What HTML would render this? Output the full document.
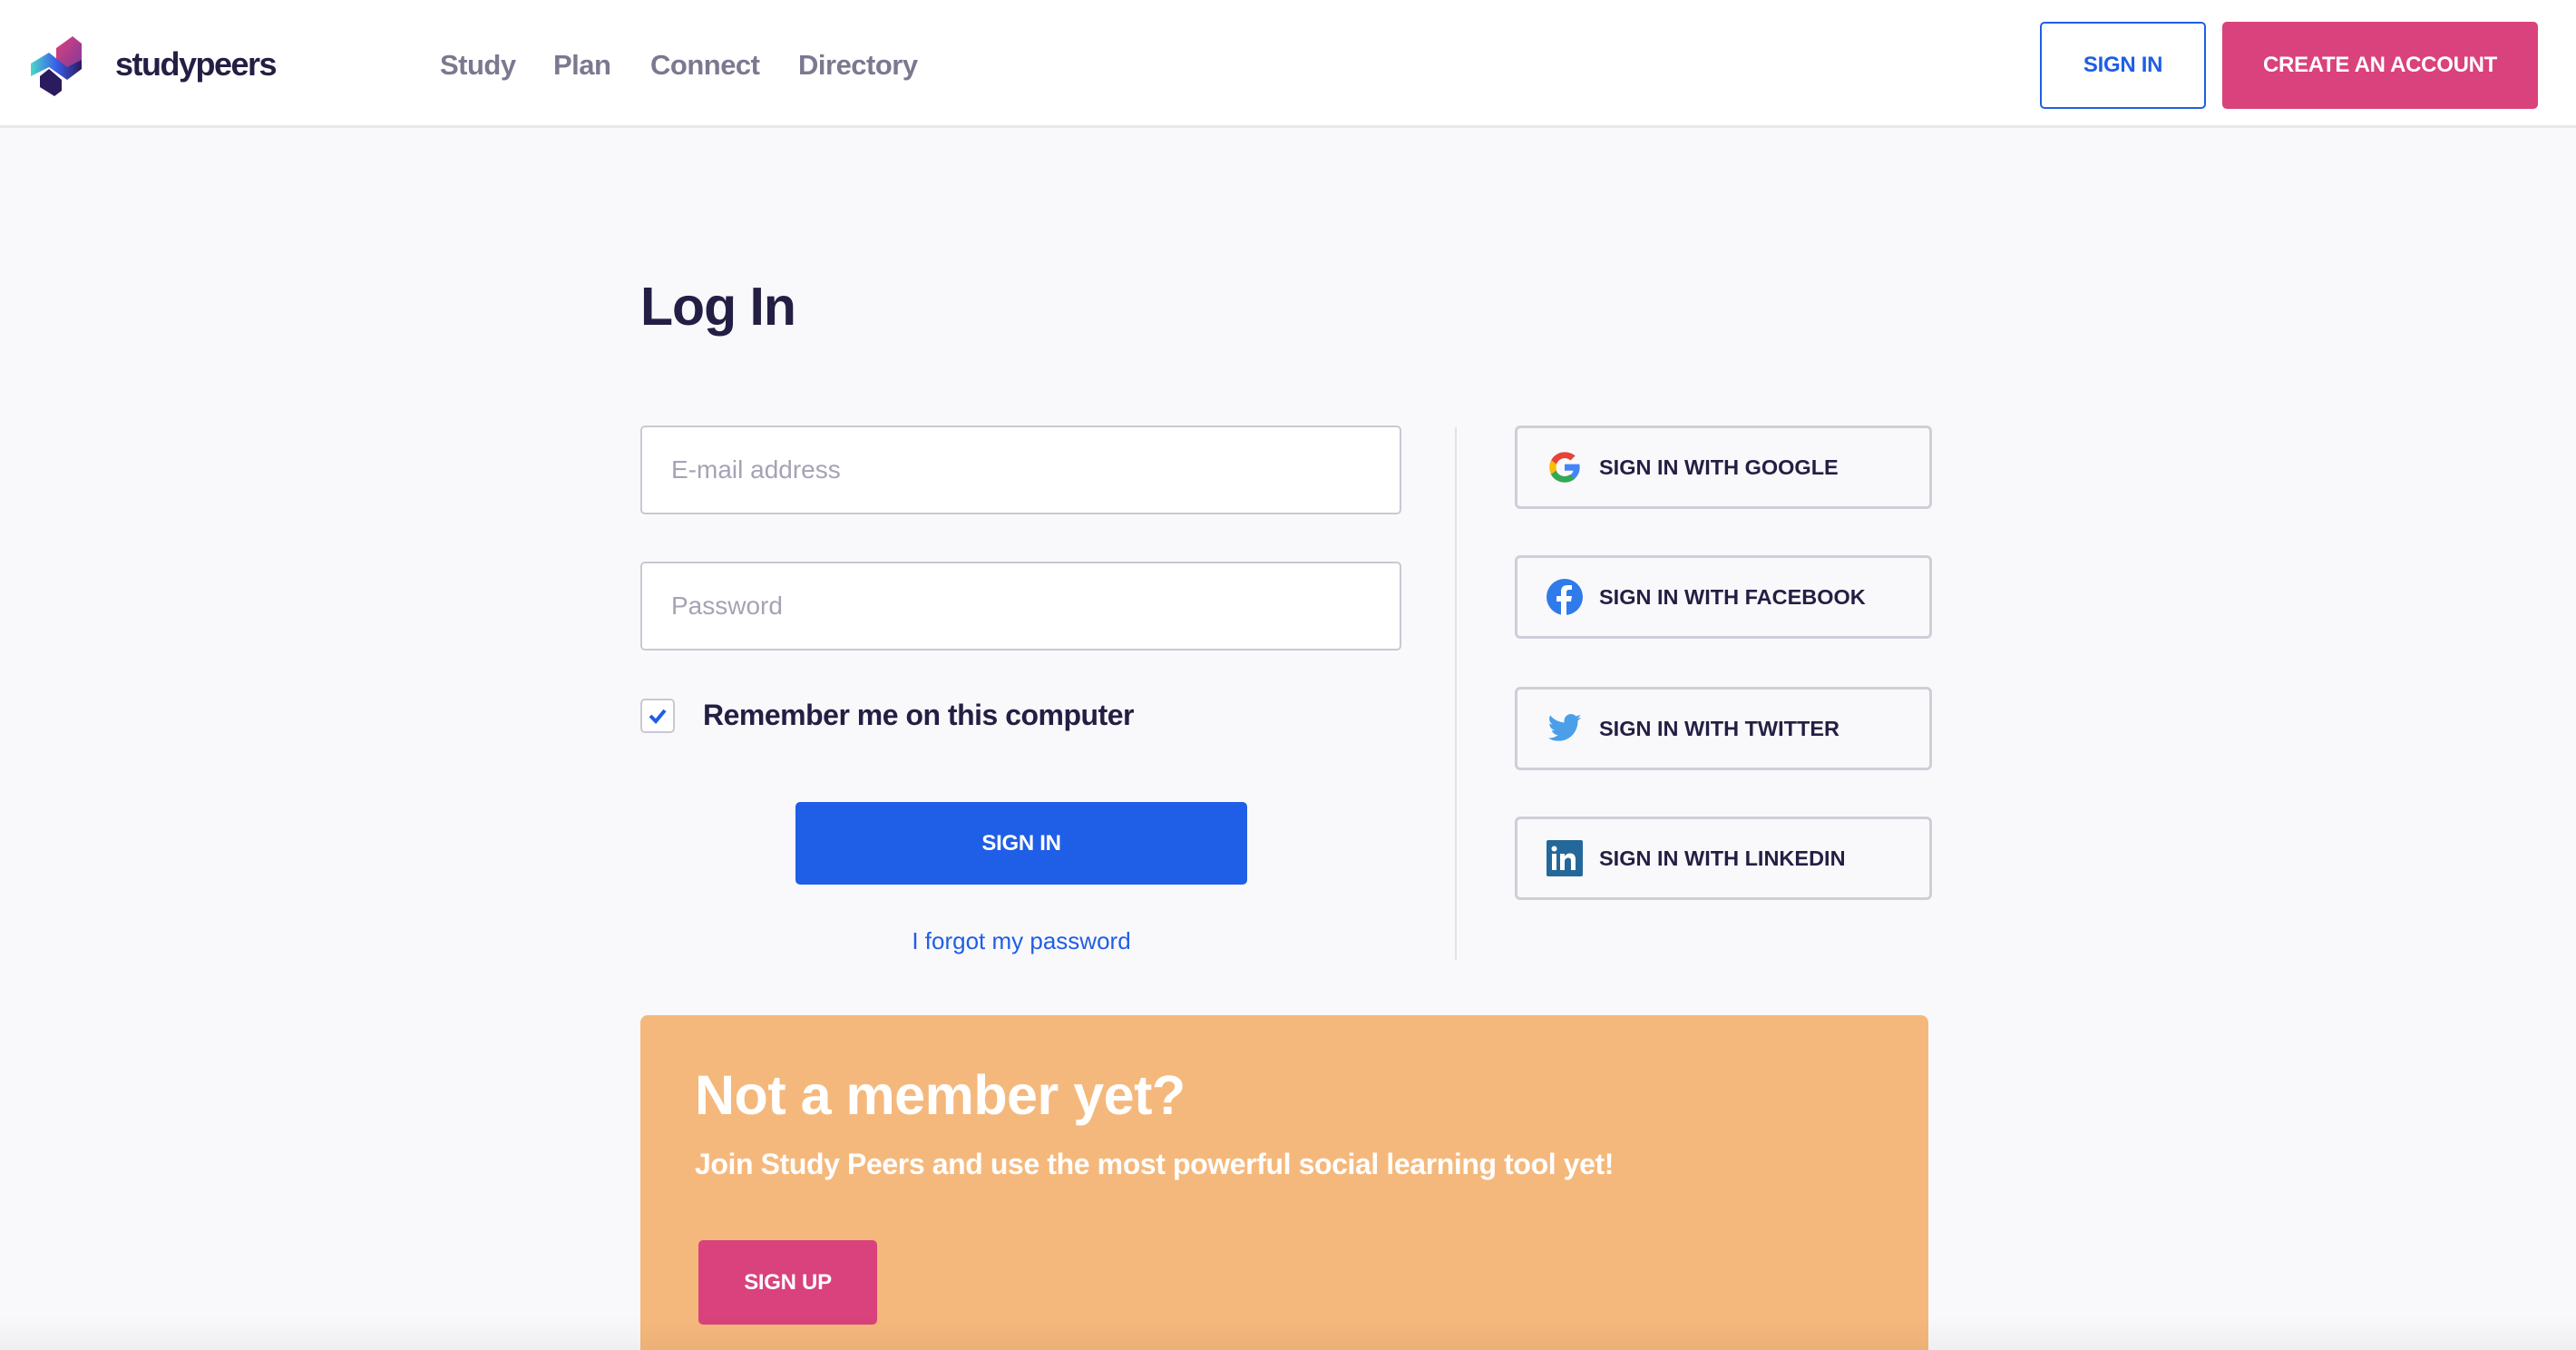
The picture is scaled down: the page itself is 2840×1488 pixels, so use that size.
<!DOCTYPE html>
<html><head><meta charset="utf-8"><style>
*{box-sizing:border-box;margin:0;padding:0}
body{width:2840px;height:1488px;overflow:hidden;background:#f9f9fb;font-family:"Liberation Sans",sans-serif;position:relative;color:#231f44}
.abs{position:absolute}
.hdr{left:0;top:0;width:2840px;height:141px;background:#fff;border-bottom:3px solid #e8e8ee}
.nav{top:54px;font-size:31px;color:#7b7890;font-weight:bold;letter-spacing:-0.5px}
.btn{display:flex;align-items:center;justify-content:center;font-weight:bold;border-radius:5px;letter-spacing:-0.3px}
.inp{left:706px;width:839px;height:98px;border:2px solid #c9c8d3;border-radius:5px;background:#fff;padding-left:32px;display:flex;align-items:center;font-size:28px;color:#a5a3b5}
.soc{left:1670px;width:460px;height:92px;border:3px solid #cfced8;border-radius:6px;display:flex;align-items:center;padding-left:32px;font-size:23.5px;font-weight:bold;color:#231f44}
.soc svg{width:40px;height:40px;margin-right:18px}
</style></head><body>
<div class="abs hdr"></div>
<svg class="abs" style="left:32px;top:38px" width="90" height="70" viewBox="0 0 90 70">
<defs><linearGradient id="g1" x1="0" y1="0" x2="1" y2="1"><stop offset="0" stop-color="#e0407a"/><stop offset="1" stop-color="#7a3a9c"/></linearGradient>
<linearGradient id="g2" x1="0" y1="0" x2="1" y2="0"><stop offset="0" stop-color="#4ad8c8"/><stop offset=".5" stop-color="#3a5ee8"/><stop offset="1" stop-color="#2a1a5e"/></linearGradient></defs>
<path d="M30 15 L48 2 L58 10 L58 30 L44 40 L30 28Z" fill="url(#g1)"/>
<path d="M2 32 L22 20 L42 36 L58 28 L58 38 L42 50 L22 36 L2 46Z" fill="url(#g2)"/>
<path d="M12 46 L22 38 L36 50 L36 62 L28 68 L12 58Z" fill="#2a1a5e"/>
</svg>
<div class="abs" style="left:127px;top:50px;font-size:36px;font-weight:bold;color:#231f44;letter-spacing:-1.5px">studypeers</div>
<div class="abs nav" style="left:485px">Study</div>
<div class="abs nav" style="left:610px">Plan</div>
<div class="abs nav" style="left:717px">Connect</div>
<div class="abs nav" style="left:880px">Directory</div>
<div class="abs btn" style="left:2249px;top:24px;width:183px;height:96px;border:2px solid #1f5ee6;color:#1f5ee6;background:#fff;font-size:24px">SIGN IN</div>
<div class="abs btn" style="left:2450px;top:24px;width:348px;height:96px;background:#d9427c;color:#fff;font-size:24px">CREATE AN ACCOUNT</div>

<div class="abs" style="left:706px;top:304px;font-size:59px;font-weight:bold;letter-spacing:-1px">Log In</div>
<div class="abs inp" style="top:469px">E-mail address</div>
<div class="abs inp" style="top:619px">Password</div>
<div class="abs" style="left:706px;top:770px;width:38px;height:38px;border:2px solid #c9c8d3;border-radius:5px;background:#fff"><svg width="34" height="34" viewBox="0 0 34 34"><path d="M9 17 L15 23 L25 11" stroke="#1f5ee6" stroke-width="4" fill="none"/></svg></div>
<div class="abs" style="left:775px;top:770px;font-size:32px;font-weight:bold;letter-spacing:-0.5px">Remember me on this computer</div>
<div class="abs btn" style="left:877px;top:884px;width:498px;height:91px;background:#1f5ee6;color:#fff;font-size:24px">SIGN IN</div>
<div class="abs" style="left:877px;width:498px;top:1022px;text-align:center;font-size:26px;color:#1f5ee6">I forgot my password</div>
<div class="abs" style="left:1604px;top:471px;width:2px;height:587px;background:#e2e1e8"></div>

<div class="abs soc" style="top:469px"><svg viewBox="0 0 48 48"><path d="M43.6 20H24v8.5h11.3C34.3 33.5 29.8 36 24 36c-6.6 0-12-5.4-12-12s5.4-12 12-12c3 0 5.7 1.1 7.8 2.9l6-6C34.3 5.8 29.4 4 24 4 13 4 4 13 4 24s9 20 20 20c11 0 20-8 20-20 0-1.3-.1-2.7-.4-4z" fill="#4285f4"/><path d="M6.3 14.7l7 5.1C15.1 15.3 19.2 12 24 12c3 0 5.7 1.1 7.8 2.9l6-6C34.3 5.8 29.4 4 24 4 16.3 4 9.7 8.3 6.3 14.7z" fill="#ea4335"/><path d="M24 44c5.2 0 9.9-1.8 13.4-4.9l-6.6-5.4C28.9 35.1 26.6 36 24 36c-5.7 0-10.300-3.7-11.600-8.700l-7 5.400C8.7 39.5 15.8 44 24 44z" fill="#34a853"/><path d="M6.3 14.7C4.8 17.5 4 20.7 4 24s.8 6.5 2.3 9.3l7-5.4c-.4-1.2-.6-2.5-.6-3.9s.2-2.7.6-3.9z" fill="#fbbc05"/></svg>SIGN IN WITH GOOGLE</div>
<div class="abs soc" style="top:612px"><svg viewBox="0 0 40 40"><circle cx="20" cy="20" r="20" fill="#2f7bea"/><path d="M22 40V25h5l1-6h-6v-4c0-2 1-3 3-3h3V7h-5c-5 0-7 3-7 7v5h-5v6h5v15z" fill="#fff"/></svg>SIGN IN WITH FACEBOOK</div>
<div class="abs soc" style="top:757px"><svg viewBox="0 0 24 24"><path d="M23 4.6c-.8.4-1.7.6-2.6.7.9-.6 1.6-1.4 2-2.5-.9.5-1.9.9-2.9 1.1a4.5 4.5 0 0 0-7.7 4.1C8 7.8 4.7 6 2.5 3.3a4.5 4.5 0 0 0 1.4 6c-.7 0-1.4-.2-2-.6 0 2.2 1.6 4 3.6 4.4-.7.2-1.4.2-2 .1.6 1.8 2.2 3.1 4.2 3.1A9 9 0 0 1 1 18.2 12.8 12.8 0 0 0 7.9 20.2c8.3 0 12.8-6.9 12.8-12.8v-.6c.9-.6 1.6-1.4 2.3-2.2z" fill="#4a9fe8"/></svg>SIGN IN WITH TWITTER</div>
<div class="abs soc" style="top:900px"><svg viewBox="0 0 40 40"><rect width="40" height="40" rx="2" fill="#24689a"/><rect x="6" y="15" width="5" height="18" fill="#fff"/><circle cx="8.5" cy="9.5" r="3" fill="#fff"/><path d="M15 15h5v3c1-2 3-3.5 6-3.5 4 0 6 2.5 6 7V33h-5v-10c0-2.5-1-3.5-3-3.5s-4 1.5-4 4V33h-5z" fill="#fff"/></svg>SIGN IN WITH LINKEDIN</div>

<div class="abs" style="left:706px;top:1119px;width:1420px;height:369px;background:#f5b87c;border-radius:8px 8px 0 0"></div>
<div class="abs" style="left:766px;top:1172px;font-size:61px;font-weight:bold;color:#fff;letter-spacing:-0.5px">Not a member yet?</div>
<div class="abs" style="left:766px;top:1265px;font-size:32px;font-weight:bold;color:#fff;letter-spacing:-0.4px">Join Study Peers and use the most powerful social learning tool yet!</div>
<div class="abs btn" style="left:770px;top:1367px;width:197px;height:93px;background:#d9427c;color:#fff;font-size:24px">SIGN UP</div>
<div class="abs" style="left:0;top:1450px;width:2840px;height:38px;background:linear-gradient(rgba(0,0,0,0),rgba(0,0,0,0.04))"></div>
</body></html>
